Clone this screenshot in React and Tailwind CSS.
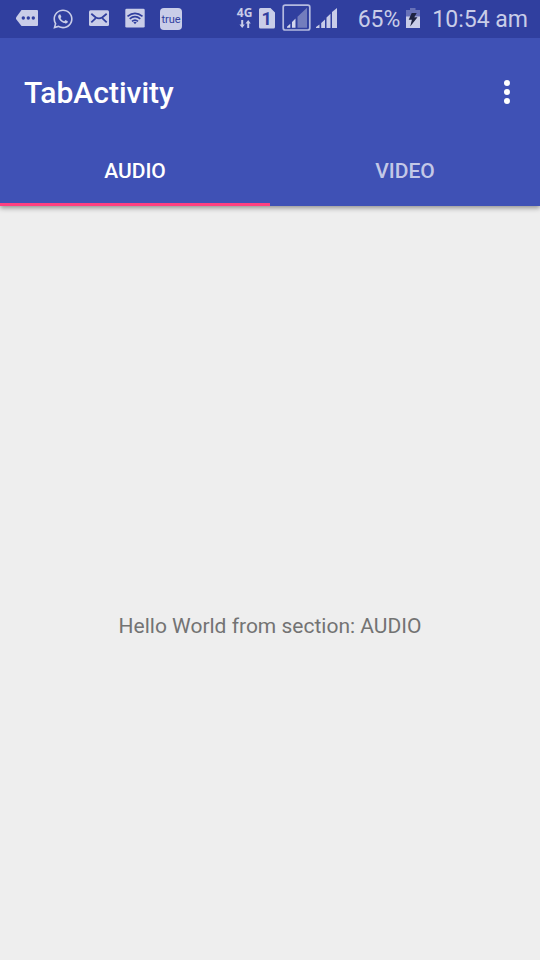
import { useState } from "react";
import { FaWhatsapp } from "react-icons/fa";

function MessageIcon() {
  return (
    <svg className="h-[22px] w-[22px]" viewBox="0 0 22 22" aria-hidden="true">
      <path d="M5.500 2H21a1 1 0 0 1 1 1v14a1 1 0 0 1-1 1H5.500L0 11V9.500z" fill="#c9cde8" />
      <g fill="#303f9f">
        <circle cx="7.300" cy="10" r="1.700" />
        <circle cx="12.300" cy="10" r="1.700" />
        <circle cx="17.300" cy="10" r="1.700" />
      </g>
    </svg>
  );
}

function MailIcon() {
  return (
    <svg className="h-[22px] w-[22px]" viewBox="0 0 22 22" aria-hidden="true">
      <rect x="1" y="2.300" width="20" height="15.700" rx="1.500" fill="#c9cde8" />
      <g fill="none" stroke="#303f9f" strokeWidth="1.800">
        <path d="M3.300 5.800 7.500 9.300Q11 11.400 14.500 9.300L18.700 5.800" />
        <path d="M3.300 14.300 7.800 10.200M18.700 14.300 14.200 10.200" />
      </g>
    </svg>
  );
}

function WifiIcon() {
  return (
    <svg className="h-[22px] w-[22px]" viewBox="0 0 22 22" aria-hidden="true">
      <rect x="1.300" y="0.700" width="19.400" height="18.800" rx="1.300" fill="#c9cde8" />
      <g fill="none" stroke="#303f9f" strokeWidth="1.700">
        <path d="M3.500 8.300Q11 2.300 18.500 8.300" />
        <path d="M5.700 10.900Q11 6.500 16.300 10.900" />
        <path d="M8 13.400Q11 10.700 14 13.400" />
      </g>
      <path d="M9.300 14.300Q11 13.200 12.700 14.300L11 16.200z" fill="#303f9f" />
    </svg>
  );
}

function DataArrows() {
  return (
    <svg className="h-2 w-3" viewBox="0 0 12 8" fill="#c9cde8" aria-hidden="true">
      <path d="M2.200 0h2v4.500h1.600L3.200 8 .500 4.500h1.700z" />
      <path d="M8.200 8h2V3.500h1.600L9.200 0 6.500 3.500h1.700z" />
    </svg>
  );
}

function BoxedSignal() {
  return (
    <svg className="h-[30px] w-[29px]" viewBox="0 0 29 30" aria-hidden="true">
      <rect x="1.200" y="1.200" width="26.600" height="24.800" rx="2" fill="none" stroke="#b4badf" strokeWidth="1.700" />
      <path d="M5 23.700v-1l3.300-3v4zM10 23.700v-5.700l3.500-3.500v9.200z" fill="#d3d6ed" />
      <path d="M15.500 23.700v-11L25 3.700v20z" fill="#737dbd" />
    </svg>
  );
}

function Signal() {
  return (
    <svg className="h-[22px] w-[22px]" viewBox="0 0 22 22" fill="#c9cde8" aria-hidden="true">
      <path d="M0 20v-1l3.500-2.500V20zM5.200 20v-5L9 11.500V20zM10.500 20V9.500l4-3.800V20zM16 20V4L21 0V20z" />
    </svg>
  );
}

function Battery() {
  return (
    <svg className="h-[22px] w-3.5" viewBox="0 0 14 22" aria-hidden="true">
      <path d="M0 2h4V0h5.500v2H14v7H0z" fill="#6872b8" />
      <path d="M0 8.500h14V20H0z" fill="#c9cde8" />
      <path d="M5.700 5h5L8.300 9.300h3.200L4.200 18.500l1.700-6.700H2.700z" fill="#1d2341" />
    </svg>
  );
}

function StatusBar() {
  return (
    <header className="relative z-10 flex h-[38px] items-center justify-between bg-[#303f9f] pl-4 pr-3 text-[#c9cde8]">
      <div className="flex items-center gap-3.5">
        <MessageIcon />
        <FaWhatsapp className="h-[22px] w-[22px]" aria-hidden="true" />
        <MailIcon />
        <WifiIcon />
        <span className="flex h-[22px] w-[22px] items-center justify-center rounded-sm bg-[#c9cde8] text-[11px] leading-none text-[#303f9f]">
          true
        </span>
      </div>
      <div className="flex items-center">
        <div className="flex w-[18px] flex-col items-center gap-0.5 pb-1">
          <span className="font-['Noto_Sans'] text-xs font-bold leading-[11px]">4G</span>
          <DataArrows />
        </div>
        <div className="relative ml-[5px] h-[22px] w-4">
          <svg className="h-[22px] w-4" viewBox="0 0 16 22" fill="#c9cde8" aria-hidden="true">
            <path d="M1.500 0H11.500L16 4.500V19a1.500 1.500 0 0 1-1.500 1.500h-13A1.500 1.500 0 0 1 0 19V1.500A1.500 1.500 0 0 1 1.500 0z" />
          </svg>
          <span className="absolute inset-0 text-center text-lg font-bold leading-[22px] text-[#303f9f]">1</span>
        </div>
        <div className="ml-[7px] flex items-center gap-[5px]">
          <BoxedSignal />
          <Signal />
        </div>
        <div className="ml-5 flex items-center gap-1.5 text-[23px] leading-7">
          <span className="pt-0.5">65%</span>
          <Battery />
        </div>
        <span className="ml-3 pt-0.5 text-[23px] leading-7">10:54 am</span>
      </div>
    </header>
  );
}

const TABS = ["AUDIO", "VIDEO"];

export default function App() {
  const [active, setActive] = useState("AUDIO");

  return (
    <div className="flex min-h-screen flex-col bg-[#eeeeee] font-[Roboto,sans-serif]">
      <StatusBar />
      <div className="bg-[#3f51b5] pt-3 shadow-[0_2px_5px_rgba(0,0,0,0.4)]">
        <div className="flex h-[84px] items-center justify-between pl-6 pr-3">
          <h1 className="pt-0.5 text-[30px] font-medium leading-9 text-white">TabActivity</h1>
          <button type="button" aria-label="More options" className="flex h-12 w-[42px] items-center justify-center">
            <svg className="h-6 w-1.5" viewBox="0 0 6 24" fill="#fff" aria-hidden="true">
              <circle cx="3" cy="3" r="3" />
              <circle cx="3" cy="12" r="3" />
              <circle cx="3" cy="21" r="3" />
            </svg>
          </button>
        </div>
        <div role="tablist" className="grid h-[72px] grid-cols-2">
          {TABS.map((tab) => (
            <button
              key={tab}
              id={`tab-${tab}`}
              type="button"
              role="tab"
              aria-selected={active === tab}
              aria-controls="section"
              onClick={() => setActive(tab)}
              className={`border-b-[3px] pt-[5px] text-[21px] font-medium leading-6 ${
                active === tab ? "border-[#ff4081] text-white" : "border-transparent text-white/70"
              }`}
            >
              {tab}
            </button>
          ))}
        </div>
      </div>
      <main
        id="section"
        role="tabpanel"
        aria-labelledby={`tab-${active}`}
        className="flex flex-1 items-center justify-center pt-[86px]"
      >
        <p className="text-[21px] leading-6 text-[#737373]">Hello World from section: {active}</p>
      </main>
    </div>
  );
}
